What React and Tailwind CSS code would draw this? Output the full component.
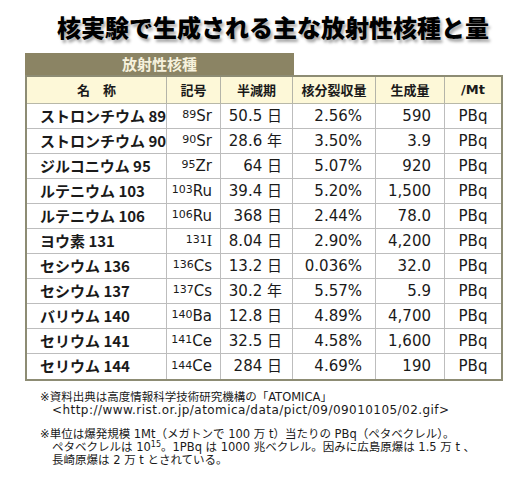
const rows = [
  { name: 'ストロンチウム 89', mass: '89', el: 'Sr', half: '50.5 日', yld: '2.56%', amt: '590' },
  { name: 'ストロンチウム 90', mass: '90', el: 'Sr', half: '28.6 年', yld: '3.50%', amt: '3.9' },
  { name: 'ジルコニウム 95', mass: '95', el: 'Zr', half: '64 日', yld: '5.07%', amt: '920' },
  { name: 'ルテニウム 103', mass: '103', el: 'Ru', half: '39.4 日', yld: '5.20%', amt: '1,500' },
  { name: 'ルテニウム 106', mass: '106', el: 'Ru', half: '368 日', yld: '2.44%', amt: '78.0' },
  { name: 'ヨウ素 131', mass: '131', el: 'I', half: '8.04 日', yld: '2.90%', amt: '4,200', serif: true },
  { name: 'セシウム 136', mass: '136', el: 'Cs', half: '13.2 日', yld: '0.036%', amt: '32.0' },
  { name: 'セシウム 137', mass: '137', el: 'Cs', half: '30.2 年', yld: '5.57%', amt: '5.9' },
  { name: 'バリウム 140', mass: '140', el: 'Ba', half: '12.8 日', yld: '4.89%', amt: '4,700' },
  { name: 'セリウム 141', mass: '141', el: 'Ce', half: '32.5 日', yld: '4.58%', amt: '1,600' },
  { name: 'セリウム 144', mass: '144', el: 'Ce', half: '284 日', yld: '4.69%', amt: '190' },
];

const jp = "font-['Noto_Sans_CJK_JP',sans-serif]";
const latin = "font-['DejaVu_Sans','Noto_Sans_CJK_JP',sans-serif]";
const cols = 'grid grid-cols-[140px_54px_72px_83px_69px_56px]';

export default function App() {
  return (
    <div className="w-[519px] h-[489px] bg-white text-[#1a1a1a] overflow-hidden">
      {/* タイトル */}
      <div className="h-[53px] pl-[27px] pt-[12px] text-center">
        <h1 className={`${jp} text-[24px] leading-[30px] font-black text-black [text-shadow:2px_3px_3px_rgba(0,0,0,0.35)]`}>
          核実験で生成される主な放射性核種と量
        </h1>
      </div>

      <div className="pl-[25px]">
        <div className={`${jp} w-[269px] h-[22px] bg-[#8b8464] text-[#f6f1dc] text-[15px] font-bold leading-[22px] text-center`}>
          放射性核種
        </div>

        <div className="w-fit border-2 border-[#8d8c74]">
          <div className={`${cols} h-[27px] bg-[#fdf8d8] border-b border-[#b8b8a8] text-[13px] font-bold ${jp}`}>
            <div className="border-r border-[#b4b4a8] flex items-center justify-center">名　称</div>
            <div className="border-r border-[#b4b4a8] flex items-center justify-center">記号</div>
            <div className="border-r border-[#b4b4a8] flex items-center justify-center">半減期</div>
            <div className="border-r border-[#b4b4a8] flex items-center justify-center">核分裂収量</div>
            <div className="border-r border-[#b4b4a8] flex items-center justify-center">生成量</div>
            <div className={`flex items-center justify-center ${latin}`}>/Mt</div>
          </div>

          {rows.map((r, i) => (
            <div
              key={r.name}
              className={`${cols} h-[25px] ${i < rows.length - 1 ? 'border-b border-[#bdbdbd]' : ''} ${latin} text-[15px]`}
            >
              <div className={`${jp} border-r border-[#bdbdbd] flex items-center pl-[13px] font-bold whitespace-nowrap`}>{r.name}</div>
              <div className="border-r border-[#bdbdbd] flex items-center justify-end pr-[8px] whitespace-nowrap">
                <sup className="text-[11px] relative -top-[1px]">{r.mass}</sup>
                <span className={r.serif ? "font-['Liberation_Serif',serif] text-[16px]" : ''}>{r.el}</span>
              </div>
              <div className="border-r border-[#bdbdbd] flex items-center justify-end pr-[10px] whitespace-nowrap">{r.half}</div>
              <div className="border-r border-[#bdbdbd] flex items-center justify-end pr-[13px]">{r.yld}</div>
              <div className="border-r border-[#bdbdbd] flex items-center justify-end pr-[13px]">{r.amt}</div>
              <div className="flex items-center justify-center">PBq</div>
            </div>
          ))}
        </div>
      </div>

      {/* 注記 */}
      <div className={`${latin} text-[11.5px] leading-[13px] pl-[40px] pt-[10px] text-[#1a1a1a] whitespace-nowrap`}>
        <div>※資料出典は高度情報科学技術研究機構の「ATOMICA」</div>
        <div className="pl-[12px] text-[12px] tracking-[0.45px]">&lt;http://www.rist.or.jp/atomica/data/pict/09/09010105/02.gif&gt;</div>
        <div className="mt-[11px]">※単位は爆発規模 1Mt（メガトンで 100 万 t）当たりの PBq（ペタベクレル）。</div>
        <div className="pl-[12px]">
          ペタベクレルは 10<sup className="text-[8px] leading-none">15</sup>。1PBq は 1000 兆ベクレル。因みに広島原爆は 1.5 万 t 、
        </div>
        <div className="pl-[12px]">長崎原爆は 2 万 t とされている。</div>
      </div>
    </div>
  );
}
